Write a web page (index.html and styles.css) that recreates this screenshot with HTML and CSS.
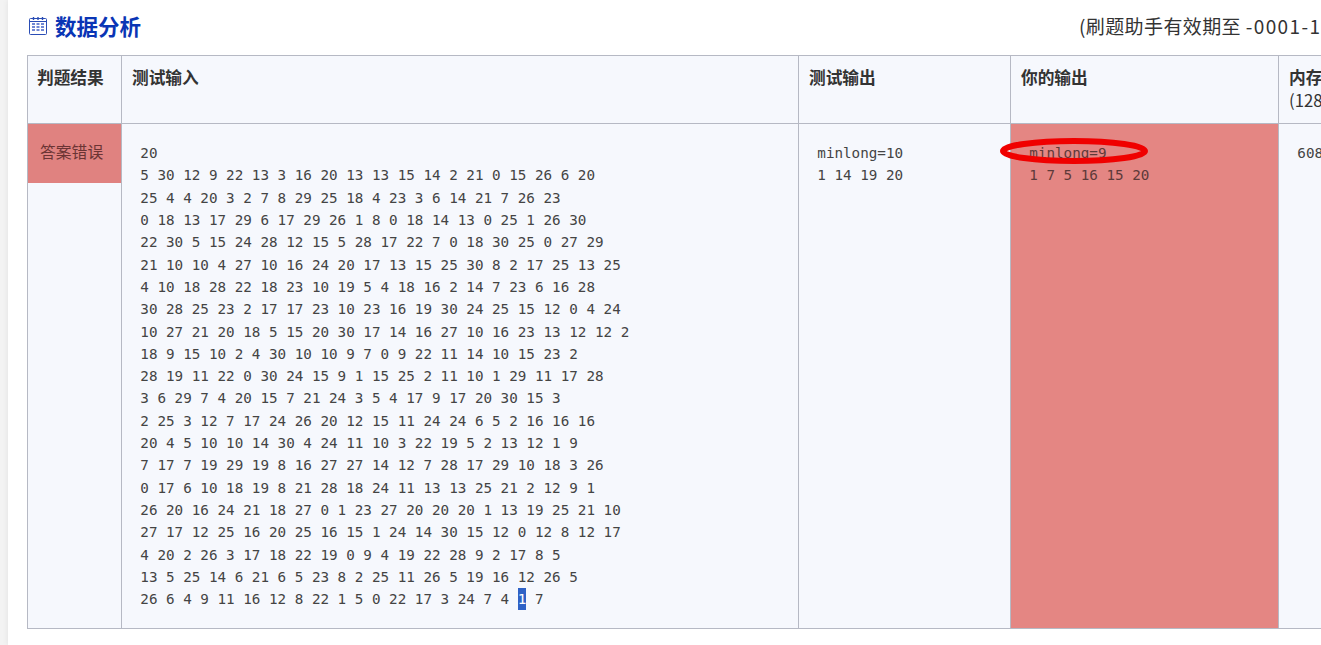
FILE: index.html
```html
<!DOCTYPE html>
<html lang="zh-CN">
<head>
  <meta charset="UTF-8">
  <meta name="viewport" content="width=device-width, initial-scale=1.0">
  <title>数据分析</title>
  <link rel="stylesheet" href="styles.css">
</head>
<body>
  <div class="card">
    <div class="title-row">
      <h2 class="title">
        <svg class="title-icon" width="18" height="18" viewBox="0 0 18 18" fill="none" stroke="#2a4db5" stroke-width="1">
          <rect x="0.5" y="1.5" width="17" height="16" rx="1"/>
          <path d="M4.5 0V3M9 0V3M13.5 0V3" stroke-width="1.4"/>
          <path d="M1 4.5H17"/>
          <path d="M3 7H6M7.5 7H10.5M12 7H15M3 10H6M7.5 10H10.5M12 10H15M3 13H6M7.5 13H10.5M12 13H15" stroke="#7188d4" stroke-width="2"/>
        </svg>
        数据分析
      </h2>
      <span class="validity">(刷题助手有效期至 <span class="validity-date">-0001-11-30 00:00:00)</span></span>
    </div>

    <!-- 判题结果 -->
    <table class="result-table">
      <colgroup>
        <col class="col-result">
        <col class="col-input">
        <col class="col-expect">
        <col class="col-output">
        <col class="col-memory">
      </colgroup>
      <thead>
        <tr>
          <th class="th-result">判题结果</th>
          <th>测试输入</th>
          <th>测试输出</th>
          <th>你的输出</th>
          <th>内存使用<br><span class="limit">(128 MB)</span></th>
        </tr>
      </thead>
      <tbody>
        <tr>
          <td class="status-cell"><div class="status-wrong">答案错误</div></td>
          <td><pre>20
5 30 12 9 22 13 3 16 20 13 13 15 14 2 21 0 15 26 6 20
25 4 4 20 3 2 7 8 29 25 18 4 23 3 6 14 21 7 26 23
0 18 13 17 29 6 17 29 26 1 8 0 18 14 13 0 25 1 26 30
22 30 5 15 24 28 12 15 5 28 17 22 7 0 18 30 25 0 27 29
21 10 10 4 27 10 16 24 20 17 13 15 25 30 8 2 17 25 13 25
4 10 18 28 22 18 23 10 19 5 4 18 16 2 14 7 23 6 16 28
30 28 25 23 2 17 17 23 10 23 16 19 30 24 25 15 12 0 4 24
10 27 21 20 18 5 15 20 30 17 14 16 27 10 16 23 13 12 12 2
18 9 15 10 2 4 30 10 10 9 7 0 9 22 11 14 10 15 23 2
28 19 11 22 0 30 24 15 9 1 15 25 2 11 10 1 29 11 17 28
3 6 29 7 4 20 15 7 21 24 3 5 4 17 9 17 20 30 15 3
2 25 3 12 7 17 24 26 20 12 15 11 24 24 6 5 2 16 16 16
20 4 5 10 10 14 30 4 24 11 10 3 22 19 5 2 13 12 1 9
7 17 7 19 29 19 8 16 27 27 14 12 7 28 17 29 10 18 3 26
0 17 6 10 18 19 8 21 28 18 24 11 13 13 25 21 2 12 9 1
26 20 16 24 21 18 27 0 1 23 27 20 20 20 1 13 19 25 21 10
27 17 12 25 16 20 25 16 15 1 24 14 30 15 12 0 12 8 12 17
4 20 2 26 3 17 18 22 19 0 9 4 19 22 28 9 2 17 8 5
13 5 25 14 6 21 6 5 23 8 2 25 11 26 5 19 16 12 26 5
26 6 4 9 11 16 12 8 22 1 5 0 22 17 3 24 7 4 <span class="picked">1</span> 7</pre></td>
          <td><pre>minlong=10
1 14 19 20</pre></td>
          <td class="output-wrong">
            <pre>minlong=9
1 7 5 16 15 20</pre>
            <svg class="circle-mark" width="154" height="32" viewBox="0 0 154 32" fill="none">
              <ellipse cx="77" cy="16" rx="71" ry="10" stroke="#f00000" stroke-width="6"/>
            </svg>
          </td>
          <td><pre>608 KB</pre></td>
        </tr>
      </tbody>
    </table>
  </div>
</body>
</html>
```

FILE: styles.css
```css
html, body {
  height: 100%;
  overflow: hidden;
}

body {
  margin: 0;
  background-color: #f3f3f3;
  color: #333;
  font-family: "Noto Sans CJK SC", "Noto Sans", sans-serif;
}

.card {
  margin-left: 8px;
  width: 1600px;
  height: 645px;
  padding: 0 0 0 19px;
  box-sizing: border-box;
  background-color: #fff;
  box-shadow: 0 0 6px rgba(0, 0, 0, 0.08);
}

.title-row {
  display: flex;
  align-items: center;
  height: 55px;
  white-space: nowrap;
}

.title {
  display: flex;
  align-items: center;
  flex: none;
  width: 1052px;
  margin: -4px 0 0;
  color: #0a35b5;
  font-size: 21.5px;
  font-weight: 700;
  line-height: 30px;
}

.title-icon {
  margin: 0 8px 0 2px;
}

.validity {
  font-size: 19px;
  line-height: 26px;
  margin-top: -4px;
  letter-spacing: 0.4px;
}

.validity-date {
  letter-spacing: 1.4px;
}

.result-table {
  table-layout: fixed;
  width: 1491px;
  border-collapse: collapse;
  border: 1px solid #b6b9c4;
  background-color: #f6f8fd;
}

.col-result { width: 94px; }
.col-input { width: 677px; }
.col-expect { width: 212px; }
.col-output { width: 268px; }
.col-memory { width: 240px; }

th, td {
  border: 1px solid #b6b9c4;
  vertical-align: top;
  text-align: left;
}

th {
  height: 68px;
  box-sizing: border-box;
  padding: 10px;
  font-size: 16.7px;
  font-weight: 700;
  line-height: 23px;
  white-space: nowrap;
}

th.th-result {
  padding-left: 9px;
}

.limit {
  font-weight: 400;
}

td {
  height: 505px;
  box-sizing: border-box;
  padding: 18.2px 10px 10px;
}

pre {
  margin: 0 0 0 8.3px;
  font-family: "DejaVu Sans Mono", monospace;
  font-size: 14.25px;
  line-height: 22.3px;
  color: #444;
}

.picked {
  display: inline-block;
  vertical-align: top;
  line-height: 22px;
  background-color: #2f62c6;
  color: #fff;
}

td.status-cell {
  padding: 0;
}

.status-wrong {
  height: 59px;
  padding-left: 12px;
  background-color: #e08280;
  color: #6b3434;
  font-size: 15.8px;
  line-height: 56px;
}

.output-wrong {
  position: relative;
  background-color: #e48683;
}

.output-wrong pre {
  color: #5e3a3a;
}

.circle-mark {
  position: absolute;
  left: -14px;
  top: 11px;
}
```
